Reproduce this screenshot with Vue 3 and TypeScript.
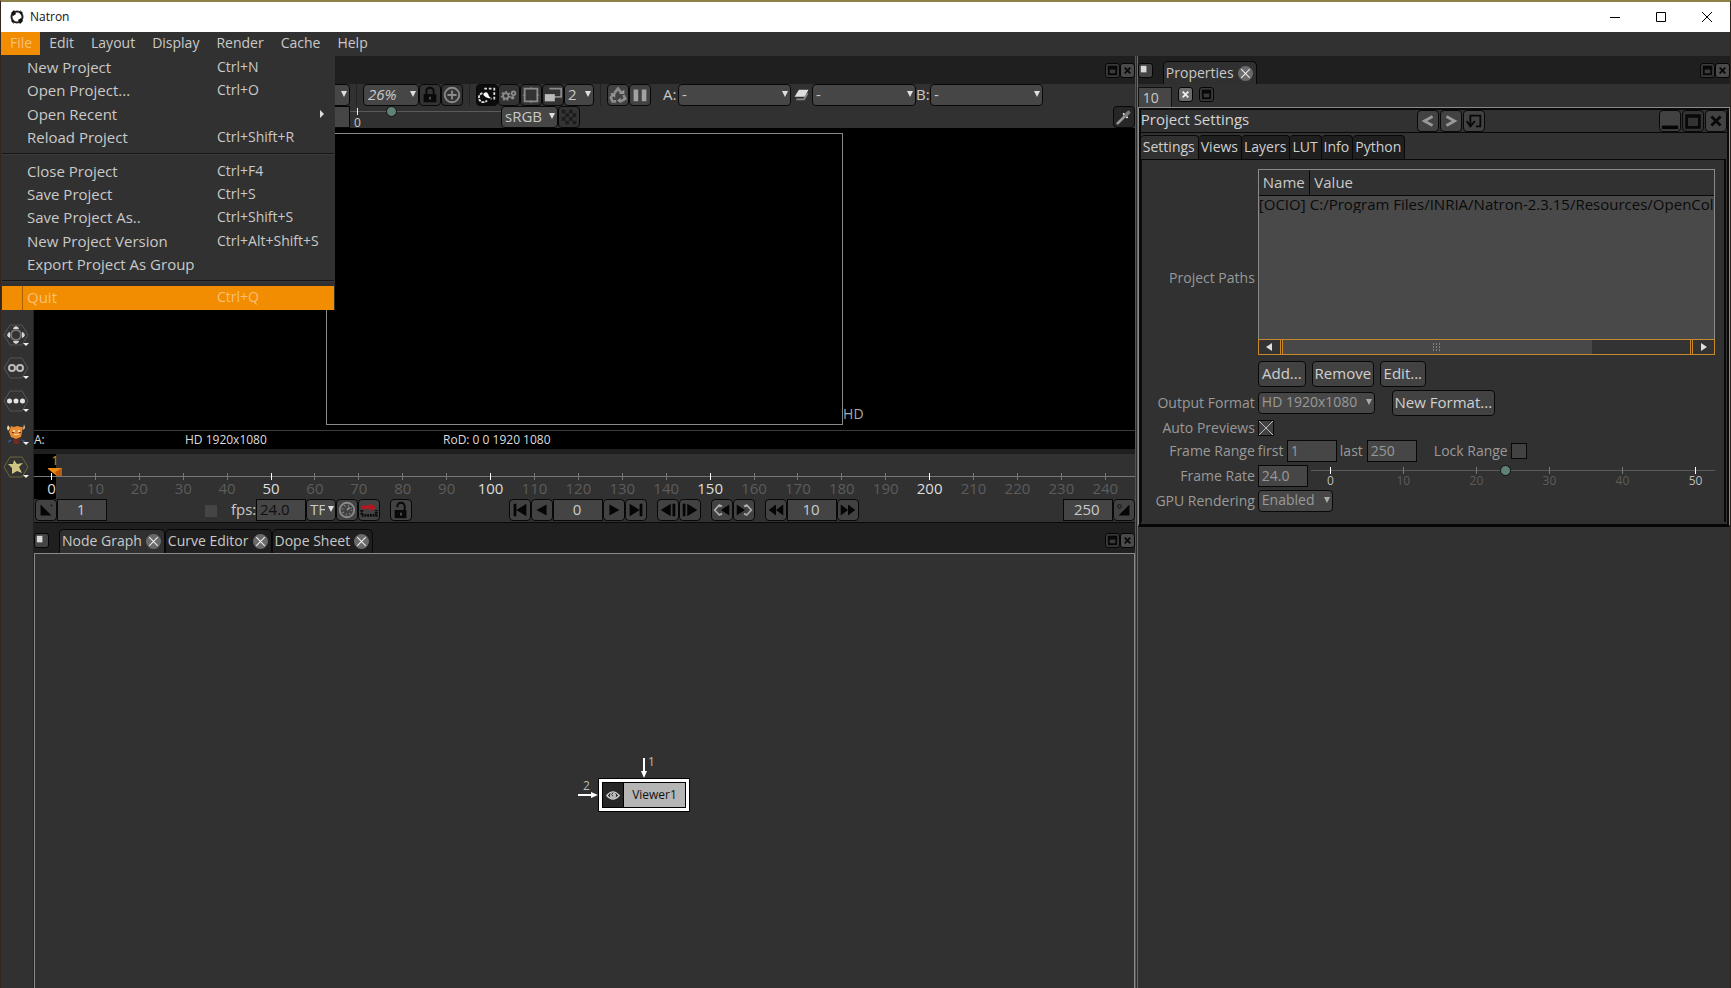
<script setup lang="ts">
import { ref } from 'vue'

interface MenuEntry { label: string; keys?: string; sub?: boolean }
interface Glyph { label: string; solid?: string; line?: string }

const menus = ['File', 'Edit', 'Layout', 'Display', 'Render', 'Cache', 'Help']
const fileTop: MenuEntry[] = [
  { label: 'New Project', keys: 'Ctrl+N' },
  { label: 'Open Project...', keys: 'Ctrl+O' },
  { label: 'Open Recent', sub: true },
  { label: 'Reload Project', keys: 'Ctrl+Shift+R' },
]
const fileMid: MenuEntry[] = [
  { label: 'Close Project', keys: 'Ctrl+F4' },
  { label: 'Save Project', keys: 'Ctrl+S' },
  { label: 'Save Project As..', keys: 'Ctrl+Shift+S' },
  { label: 'New Project Version', keys: 'Ctrl+Alt+Shift+S' },
  { label: 'Export Project As Group' },
]

const frames = Array.from({ length: 25 }, (_, i) => i * 10)
const rates = [0, 10, 20, 30, 40, 50]
const settingsTabs = ['Settings', 'Views', 'Layers', 'LUT', 'Info', 'Python']
const lowerTabs = ['Node Graph', 'Curve Editor', 'Dope Sheet']

const before: Glyph[] = [
  { label: 'First frame', solid: 'M4 4h3v14H4zM18 4v14L7 11z' },
  { label: 'Play backward', solid: 'M16 5v12L5 11z' },
]
const after: Glyph[] = [
  { label: 'Play forward', solid: 'M6 5v12l11-6z' },
  { label: 'Last frame', solid: 'M4 4v14l11-7zM15 4h3v14h-3z' },
]
const steps: Glyph[] = [
  { label: 'Previous frame', solid: 'M14 4v14L3 11zM16 4h3v14h-3z' },
  { label: 'Next frame', solid: 'M3 4h3v14H3zM8 4v14l11-7z' },
]
const keyframes: Glyph[] = [
  { label: 'Previous keyframe', solid: 'M19 5v12l-9-6z', line: 'M11 7L8 5.500L3 11l5 5.500L11 15' },
  { label: 'Next keyframe', solid: 'M3 5v12l9-6z', line: 'M11 7l3-1.500L19 11l-5 5.500L11 15' },
]

const cpu = ref(26)
const rate = ref(24)
</script>

<template>
  <div class="window">
    <header class="title">
      <svg class="logo" viewBox="0 0 16 16" aria-hidden="true">
        <circle cx="8" cy="8" r="5.500" fill="none" stroke="#222" stroke-width="2" />
        <path d="M2 4l3-3 2 4-3 2zM14 12l-3 3-2-4 3-2zM11 1l3 3-2 2zM5 15l-3-3 2-2z" fill="#111" />
      </svg>
      <span class="name">Natron</span>
      <button class="sys" aria-label="Minimize"><svg viewBox="0 0 12 12"><path d="M1 6.500h10" /></svg></button>
      <button class="sys" aria-label="Maximize"><svg viewBox="0 0 12 12"><path d="M1.500 1.500h9v9h-9z" /></svg></button>
      <button class="sys" aria-label="Close"><svg viewBox="0 0 12 12"><path d="M1 1l10 10M11 1L1 11" /></svg></button>
    </header>

    <nav class="menubar">
      <button v-for="m in menus" :key="m" :class="{ open: m === 'File' }">{{ m }}</button>
      <div class="dropdown" role="menu">
        <div class="group four">
          <button v-for="e in fileTop" :key="e.label" role="menuitem"><span>{{ e.label }}</span><span class="keys">{{ e.keys }}</span><i v-if="e.sub" class="sub" /></button>
        </div>
        <hr>
        <div class="group five">
          <button v-for="e in fileMid" :key="e.label" role="menuitem"><span>{{ e.label }}</span><span class="keys">{{ e.keys }}</span></button>
        </div>
        <hr>
        <button class="quit" role="menuitem"><span>Quit</span><span class="keys">Ctrl+Q</span></button>
      </div>
    </nav>

    <div class="body">
      <aside class="tools">
        <button aria-label="Transform"><svg viewBox="0 0 28 28"><path class="hex" d="M8 4h12l6 10-6 10H8L2 14z" /><circle cx="14" cy="14" r="5" fill="none" stroke="#777" stroke-width="2" /><path fill="#d4d4d4" d="M14 5q3 1 3 3h-6q0-2 3-3zM14 23q3-1 3-3h-6q0 2 3 3zM5 14q1-3 3-3v6q-2 0-3-3zM23 14q-1-3-3-3v6q2 0 3-3z" /><path class="more" d="M21 22h6l-3 3z" /></svg></button>
        <button aria-label="Views"><svg viewBox="0 0 28 28"><path class="hex" d="M8 4h12l6 10-6 10H8L2 14z" /><circle cx="10" cy="14" r="3" fill="none" stroke="#bbb" stroke-width="2" /><circle cx="18" cy="14" r="3" fill="none" stroke="#bbb" stroke-width="2" /><path class="more" d="M21 22h6l-3 3z" /></svg></button>
        <button aria-label="Other"><svg viewBox="0 0 28 28"><path class="hex" d="M8 4h12l6 10-6 10H8L2 14z" /><path fill="#e4e4e4" d="M5 14a2.500 2.500 0 1 0 5 0a2.500 2.500 0 1 0-5 0M11.500 14a2.500 2.500 0 1 0 5 0a2.500 2.500 0 1 0-5 0M18 14a2.500 2.500 0 1 0 5 0a2.500 2.500 0 1 0-5 0" /><path class="more" d="M21 22h6l-3 3z" /></svg></button>
        <button aria-label="GMIC"><svg viewBox="0 0 28 28"><path fill="#e88a32" d="M9 6l3 1 3-1 4 1 2 0-1 5-1 5-5 2-5-2-2-5z" /><path fill="#f7d9a8" d="M6 5l2 3-2 3-1-3zM22 4l1 4-2 2zM11 10h2v2h-2zM16 10h2v2h-2zM12 14h5v1h-5z" /><path fill="#6b2d22" d="M10 12h2v1h-2zM17 12h2v1h-2zM11 19h7l-1 5h-5z" /><path stroke="#465a92" stroke-width="1.500" d="M9 20l-3 2M20 20l3 2" /><path class="more" d="M21 22h6l-3 3z" /></svg></button>
        <button aria-label="Extra"><svg viewBox="0 0 28 28"><path class="hex gold" d="M8 4h12l6 10-6 10H8L2 14z" /><path fill="#d0c684" d="M12 7l3 4 6-1-4 4 3 6-5-2-5 3v-6l-4-4h5z" /><path class="more" d="M21 22h6l-3 3z" /></svg></button>
      </aside>

      <main class="center">
        <div class="tabbar upper">
          <span class="push" />
          <button class="mini" aria-label="Float viewer"><svg viewBox="0 0 14 14"><path d="M3 3h8v8H3z" /><path class="fillk" d="M3 3h8v2H3z" /></svg></button>
          <button class="mini lit" aria-label="Close viewer"><svg viewBox="0 0 14 14"><path d="M4 4l6 6M10 4l-6 6" /></svg></button>
        </div>

        <div class="row">
          <span class="sel under"><select aria-label="Layer"><option></option></select></span>
          <i class="sep" />
          <span class="sel zoom"><select aria-label="Zoom"><option>26%</option></select></span>
          <button class="ic" aria-label="Synchronize viewers"><svg viewBox="0 0 22 22"><path d="M7 11V7q0-4 4-4t4 4v4" fill="none" stroke="#090909" stroke-width="2" /><path fill="#090909" d="M4 10h14v9H4z" /><path fill="#555" d="M10 13h2v3h-2z" /></svg></button>
          <button class="ic" aria-label="Center image"><svg class="gray" viewBox="0 0 22 22"><circle cx="11" cy="11" r="8" /><path d="M11 6v10M6 11h10" /></svg></button>
          <i class="sep" />
          <button class="ic on" aria-label="Clip to project"><svg viewBox="0 0 22 22"><path d="M8 4h11v11h-4" fill="none" stroke="#ddd" stroke-width="2" stroke-dasharray="3 2" /><path d="M6 9a5 5 0 1 0 5 8" fill="none" stroke="#ddd" stroke-width="2" stroke-dasharray="3 1" /><path fill="#fff" d="M7 11q0-3 3-3 2 0 3 4l2 2q-4 2-8-3z" /></svg></button>
          <button class="ic" aria-label="Full frame processing"><svg class="gray" viewBox="0 0 22 22"><circle cx="7.500" cy="12" r="4.500" stroke-dasharray="2 2" /><circle cx="7.500" cy="12" r="3" /><circle cx="16" cy="9" r="2" /><circle cx="15" cy="14" r="1" /></svg></button>
          <button class="ic" aria-label="Region of interest"><svg class="gray" viewBox="0 0 22 22"><path d="M4 4h14v14H4z" /><path d="M11 2v3M11 17v3M2 11h3M17 11h3" stroke-width="1" /></svg></button>
          <button class="ic" aria-label="Proxy mode"><svg class="gray" viewBox="0 0 22 22"><path d="M7 4h13v9H12" /><path d="M2 10h11v8H2z" fill="#bbb" stroke="none" /></svg></button>
          <span class="sel two"><select aria-label="Proxy level"><option>2</option></select></span>
          <i class="sep" />
          <button class="ic lite" aria-label="Refresh"><svg class="gray" viewBox="0 0 22 22"><path d="M7 9l4-5 4 5M17 11l2 4-5 3M9 18H5l-2-4 3-4" stroke-width="3" /><path d="M18 5v5h-6zM14 14v6l-4-3zM2 9l6 0v5z" fill="#999" stroke="none" /></svg></button>
          <button class="ic lite" aria-label="Pause updates"><svg viewBox="0 0 22 22"><path fill="#a2a2a2" d="M4 5h5v13H4zM13 5h5v13h-5z" /></svg></button>
          <label class="in" for="inputA">A:</label>
          <span class="sel wide"><select id="inputA"><option>-</option></select></span>
          <button class="ic flat" aria-label="Compositing"><svg viewBox="0 0 22 22"><path fill="#ddd" d="M8 5h11l-4 8H3z" /><path fill="none" stroke="#888" stroke-width="2" d="M5 16h9l4-7" /></svg></button>
          <span class="sel op"><select aria-label="Operator"><option>-</option></select></span>
          <label class="inb" for="inputB">B:</label>
          <span class="sel wide"><select id="inputB"><option>-</option></select></span>
        </div>

        <div class="row second">
          <input class="gain" aria-label="Gamma" value="">
          <div class="gamma">
            <input v-model="cpu" type="range" min="0" max="100" aria-label="Gamma slider">
            <span class="zero">0</span>
          </div>
          <span class="sel srgb"><select aria-label="Color space"><option>sRGB</option></select></span>
          <button class="ic" aria-label="Checkerboard"><svg viewBox="0 0 22 22"><path fill="#1c1c1c" d="M3 3h4v4H3zM11 3h4v4h-4zM7 7h4v4H7zM15 7h4v4h-4zM3 11h4v4H3zM11 11h4v4h-4zM7 15h4v4H7zM15 15h4v4h-4z" /></svg></button>
          <span class="push" />
          <button class="ic pick" aria-label="Color picker"><svg viewBox="0 0 22 22"><path d="M4 18l8-8" stroke="#999" stroke-width="3" stroke-linecap="round" /><path d="M10 7l5 5" stroke="#eee" stroke-width="2" /><path d="M13 9l3-3" stroke="#777" stroke-width="4" stroke-linecap="round" /></svg></button>
        </div>

        <div class="screen">
          <div class="format"><span>HD</span></div>
        </div>
        <div class="info"><span>A:</span><span>HD 1920x1080</span><span>RoD: 0 0 1920 1080</span></div>

        <div class="timeline">
          <div class="past" />
          <div class="marker"><span>1</span><svg viewBox="0 0 14 8"><path fill="#f08a12" d="M0 0h14v8H9L0 1z" /><path fill="#b65c06" d="M7 4l7-4v8H9z" /></svg></div>
          <div class="ruler">
            <span v-for="f in frames" :key="f" :class="{ major: f % 50 === 0 }">{{ f }}</span>
          </div>
        </div>

        <div class="player">
          <button class="ic lite" aria-label="Set playback in"><svg viewBox="0 0 22 22"><path fill="#050505" d="M5 5v12h12z" /><circle cx="17" cy="6" r="1" fill="#111" /></svg></button>
          <input class="num mid" aria-label="In point" value="1">
          <input class="cache" type="checkbox" aria-label="Desired fps">
          <label class="fps" for="fps">fps:</label>
          <input id="fps" class="num dark" value="24.0">
          <span class="sel tf"><select aria-label="Time format"><option>TF</option></select></span>
          <button class="ic lite" aria-label="Turbo mode"><svg class="gray" viewBox="0 0 22 22"><circle cx="11" cy="11" r="8" /><circle cx="11" cy="11" r="5" stroke-dasharray="1 3" /><path d="M11 11l3-3" /></svg></button>
          <button class="ic lite" aria-label="Playback mode"><svg viewBox="0 0 22 22"><path d="M3 11v6h16v-6" fill="none" stroke="#0a0a0a" stroke-width="3" stroke-dasharray="2 1" /><path fill="#b3161c" d="M3 6h8V3l8 5-6 5V10H3z" /></svg></button>
          <button class="ic lite lock" aria-label="Lock timeline range"><svg viewBox="0 0 22 22"><path d="M7 8V6q1-3 4-3t4 3v6" fill="none" stroke="#090909" stroke-width="2" /><path fill="#090909" d="M4 11h13v9H4z" /><path fill="#555" d="M10 14h2v3h-2z" /></svg></button>
          <button v-for="g in before" :key="g.label" class="ic lite" :aria-label="g.label"><svg viewBox="0 0 22 22"><path :d="g.solid" fill="#050505" /></svg></button>
          <input class="num mid" aria-label="Current frame" value="0">
          <button v-for="g in after" :key="g.label" class="ic lite" :aria-label="g.label"><svg viewBox="0 0 22 22"><path :d="g.solid" fill="#050505" /></svg></button>
          <div class="pair">
            <button v-for="g in steps" :key="g.label" class="ic lite" :aria-label="g.label"><svg viewBox="0 0 22 22"><path :d="g.solid" fill="#050505" /></svg></button>
          </div>
          <div class="pair">
            <button v-for="g in keyframes" :key="g.label" class="ic lite" :aria-label="g.label"><svg viewBox="0 0 22 22"><path :d="g.line" fill="none" stroke="#aaa" stroke-width="2" /><path :d="g.solid" fill="#050505" /></svg></button>
          </div>
          <button class="ic lite jump" aria-label="Jump back"><svg viewBox="0 0 22 22"><path fill="#050505" d="M11 5v12L3 11zM19 5v12l-8-6z" /></svg></button>
          <input class="num mid" aria-label="Frame increment" value="10">
          <button class="ic lite" aria-label="Jump forward"><svg viewBox="0 0 22 22"><path fill="#050505" d="M3 5v12l8-6zM11 5v12l8-6z" /></svg></button>
          <span class="push" />
          <input class="num mid" aria-label="Out point" value="250">
          <button class="ic lite" aria-label="Set playback out"><svg viewBox="0 0 22 22"><path fill="#050505" d="M17 5v12H5z" /><circle cx="6" cy="7" r="2" fill="none" stroke="#111" /></svg></button>
        </div>

        <div class="tabbar lower">
          <button class="mini corner" aria-label="Manage layout"><svg viewBox="0 0 14 14"><path fill="#d8d8d8" stroke="none" d="M2 2h6v7H2z" /></svg></button>
          <div v-for="t in lowerTabs" :key="t" class="tab" :class="{ active: t === 'Node Graph' }">
            <button class="tname">{{ t }}</button>
            <button class="x" :aria-label="'Close ' + t"><svg viewBox="0 0 14 14"><path d="M3 3l8 8M11 3l-8 8" /></svg></button>
          </div>
          <span class="push" />
          <button class="mini" aria-label="Float pane"><svg viewBox="0 0 14 14"><path d="M3 3h8v8H3z" /><path class="fillk" d="M3 3h8v2H3z" /></svg></button>
          <button class="mini lit" aria-label="Close pane"><svg viewBox="0 0 14 14"><path d="M4 4l6 6M10 4l-6 6" /></svg></button>
        </div>

        <section class="graph">
          <div class="node">
            <div class="eye"><svg viewBox="0 0 18 14"><path d="M2 7q7-8 14 0q-7 8-14 0z" fill="none" stroke="#ccc" stroke-width="1.500" /><circle cx="9" cy="7" r="3.500" fill="#bbb" /><path d="M9 4q-3 2 0 4" stroke="#333" fill="none" /></svg></div>
            <div class="nname">Viewer1</div>
          </div>
          <svg class="arrow down" viewBox="0 0 8 20"><path d="M3 0h2v13h2L4 20 1 13h2z" /></svg>
          <span class="n1">1</span>
          <svg class="arrow side" viewBox="0 0 20 8"><path d="M0 3h13V1l7 3-7 3V5H0z" /></svg>
          <span class="n2">2</span>
        </section>
      </main>

      <div class="splitter" />

      <section class="right">
        <div class="tabbar upper">
          <button class="mini corner" aria-label="Manage layout"><svg viewBox="0 0 14 14"><path fill="#d8d8d8" stroke="none" d="M2 2h6v7H2z" /></svg></button>
          <div class="tab active props">
            <button class="tname">Properties</button>
            <button class="x" aria-label="Close Properties"><svg viewBox="0 0 14 14"><path d="M3 3l8 8M11 3l-8 8" /></svg></button>
          </div>
          <span class="push" />
          <button class="mini" aria-label="Float properties"><svg viewBox="0 0 14 14"><path d="M3 3h8v8H3z" /><path class="fillk" d="M3 3h8v2H3z" /></svg></button>
          <button class="mini lit" aria-label="Close properties"><svg viewBox="0 0 14 14"><path d="M4 4l6 6M10 4l-6 6" /></svg></button>
        </div>
        <div class="stackbar">
          <input aria-label="Maximum panels" value="10">
          <button class="mini bright" aria-label="Clear all panels"><svg viewBox="0 0 14 14"><path d="M4 4l6 6M10 4l-6 6" /></svg></button>
          <button class="mini" aria-label="Minimize all panels"><svg viewBox="0 0 14 14"><path d="M3 3h8v8H3z" /><path class="fillk" d="M3 3h8v2H3z" /></svg></button>
        </div>

        <div class="panel">
          <div class="phead">
            <span class="ptitle">Project Settings</span>
            <button class="ic lite" aria-label="Undo"><svg class="chev" viewBox="0 0 22 22"><path d="M16 6L7 11l9 5" /></svg></button>
            <button class="ic lite" aria-label="Redo"><svg class="chev" viewBox="0 0 22 22"><path d="M6 6l9 5-9 5" /></svg></button>
            <button class="ic lite" aria-label="Restore defaults"><svg class="restore" viewBox="0 0 22 22"><path d="M7 16V5h11v12h-5M3 11l4 6 5-6" /></svg></button>
            <span class="push" />
            <button class="ic lite" aria-label="Minimize panel"><svg viewBox="0 0 22 22"><path fill="#050505" d="M2 16h18v4H2z" /></svg></button>
            <button class="ic" aria-label="Float panel"><svg class="blk" viewBox="0 0 22 22"><path d="M4 5h14v13H4zM4 6h14" /></svg></button>
            <button class="ic lite" aria-label="Close panel"><svg class="blk" viewBox="0 0 22 22"><path d="M6 6l10 10M16 6L6 16" /></svg></button>
          </div>
          <div class="ptabs">
            <button v-for="t in settingsTabs" :key="t" :class="{ active: t === 'Settings' }">{{ t }}</button>
          </div>
          <form class="form" @submit.prevent>
            <span class="lab">Project Paths</span>
            <div class="paths">
              <div class="box">
                <table>
                  <thead><tr><th>Name</th><th>Value</th></tr></thead>
                  <tbody><tr><td>[OCIO]</td><td>C:/Program Files/INRIA/Natron-2.3.15/Resources/OpenColorIO-Configs</td></tr></tbody>
                </table>
                <div class="hbar">
                  <button type="button" aria-label="Scroll left"><i class="lt" /></button>
                  <div class="track"><div class="thumb"><svg viewBox="0 0 10 8"><path d="M0 1h9M0 4h9M0 7h9" stroke="#bbb" stroke-dasharray="1 2" /></svg></div></div>
                  <button type="button" aria-label="Scroll right"><i class="rt" /></button>
                </div>
              </div>
              <div class="acts">
                <button type="button" class="push-b add">Add...</button>
                <button type="button" class="push-b rem">Remove</button>
                <button type="button" class="push-b edi">Edit...</button>
              </div>
            </div>

            <label class="lab" for="fmt">Output Format</label>
            <div class="field">
              <span class="sel fmt"><select id="fmt"><option>HD 1920x1080</option></select></span>
              <button type="button" class="push-b newf">New Format...</button>
            </div>

            <label class="lab" for="prev">Auto Previews</label>
            <div class="field"><input id="prev" class="chk" type="checkbox" checked></div>

            <span class="lab">Frame Range</span>
            <div class="field">
              <label class="first" for="first">first</label><input id="first" class="num" value="1">
              <label class="last" for="last">last</label><input id="last" class="num" value="250">
              <label class="lockr" for="lockr">Lock Range</label><input id="lockr" class="chk" type="checkbox">
            </div>

            <label class="lab" for="rate">Frame Rate</label>
            <div class="field">
              <input id="rate" class="num" value="24.0">
              <div class="scale">
                <input v-model="rate" type="range" min="-2" max="52" aria-label="Frame rate slider">
                <div class="marks"><span v-for="r in rates" :key="r" :class="{ major: r % 50 === 0 }">{{ r }}</span></div>
              </div>
            </div>

            <label class="lab" for="gpu">GPU Rendering</label>
            <div class="field"><span class="sel gpu"><select id="gpu"><option>Enabled</option></select></span></div>
          </form>
        </div>
      </section>
    </div>
  </div>
</template>

<style>
html, body, #app { height: 100%; margin: 0; }
</style>

<style scoped>
* { box-sizing: border-box; }
.window {
  height: 100vh; display: flex; flex-direction: column; overflow: hidden;
  border: solid #33261f; border-width: 2px 1px 0; border-top-color: #8f8048;
  background: #313131; color: #c9c9c9;
  font: 15px/20px "Open Sans", "Noto Sans", sans-serif;
}
button, input, select { font: inherit; color: inherit; margin: 0; padding: 0; border: 0; border-radius: 0; background: none; min-width: 0; outline: none; }
button svg { display: block; width: 100%; height: 100%; }
.push { flex: 1; }

.title { flex: none; height: 30px; background: #fff; color: #111; display: flex; align-items: center; font-size: 12px; padding-left: 8px; }
.logo { width: 16px; height: 16px; margin-right: 5px; }
.name { flex: 1; }
.sys { width: 46px; height: 28px; display: grid; place-items: center; }
.sys svg { width: 12px; height: 12px; fill: none; stroke: #000; }

.menubar { flex: none; height: 24px; display: flex; position: relative; z-index: 5; font-size: 14px; }
.menubar > button { padding: 0 8px 2px 9px; height: 23px; }
.menubar > button.open { background: #f28c00; color: #f8c078; }
.dropdown { position: absolute; left: 0; top: 23px; width: 334px; padding: 0 1px; background: #313131; font-size: 15px; }
.group { display: grid; grid-auto-rows: 1fr; }
.four { height: 94px; }
.five { height: 117px; }
.dropdown button { display: grid; grid-template-columns: 190px 1fr 12px; align-items: center; text-align: left; padding: 0 2px 0 25px; width: 100%; white-space: nowrap; }
.keys { font-size: 14px; }
.dropdown hr { height: 2px; margin: 4px 0; border: 0; border-top: 1px solid #161616; background: #3a3a3a; }
.dropdown .quit { height: 24px; padding-bottom: 2px; background: #f28c00; color: #f8c078; box-shadow: inset 20px 0 #f28c00, inset 21px 0 #a86000; }
.sub { border: 4px solid transparent; border-left-color: #ddd; border-right: 0; }

.body { flex: 1; min-height: 0; display: flex; }
.tools { flex: none; width: 33px; display: flex; flex-direction: column; gap: 5px; padding: 265px 0 0 1px; border-right: 1px solid #222; }
.tools button { width: 28px; height: 28px; }
.hex { fill: #333; stroke: #555; stroke-width: 1; }
.gold { stroke: #6b6636; }
.more { fill: #eee; }
.center { flex: 1; min-width: 0; display: flex; flex-direction: column; }
.splitter { flex: none; width: 3px; background: #2c2c2c; border: solid #6a6a6a; border-width: 0 1px; border-left-color: #555; }
.right { flex: none; width: 34.25%; display: flex; flex-direction: column; }

.tabbar { flex: none; background: #1f1f1f; display: flex; align-items: center; padding-top: 4px; font-size: 14px; }
.upper { height: 28px; }
.mini { width: 15px; height: 15px; border: 1px solid #050505; border-radius: 3px; background: #3a3a3a; }
.mini svg { fill: none; stroke: #080808; stroke-width: 2; }
.mini .fillk { fill: #080808; }
.lit { background: #4a4a4a; }
.bright { background: #6c6c6c; }
.bright svg { stroke: #eee; }
.upper .mini { margin-bottom: 4px; }
.tab { height: 24px; display: flex; align-items: center; padding: 0 3px 0 2px; background: #1f1f1f; border: solid #080808; border-width: 1px 1px 0; border-radius: 5px 5px 0 0; align-self: flex-end; white-space: nowrap; }
.tab.active { background: #303030; }
.tname { padding-bottom: 1px; }
.x { width: 15px; height: 15px; border-radius: 8px; background: #6a6a6a; margin-left: 4px; }
.x svg { stroke: #eee; stroke-width: 1; }
.corner { margin-right: 10px; background: #444; }
.lower { height: 31px; border-top: 1px solid #0a0a0a; }

.row { flex: none; height: 22px; display: flex; align-items: stretch; }
.sep { width: 1px; margin: 0 6px; background: #232323; }
.ic { flex: none; width: 22px; height: 22px; border: 1px solid #080808; border-radius: 4px; background: #333; }
.lite { background: #424242; }
.on { background: #0c0c0c; }
.pick { background: #262626; }
.flat { border-color: transparent; width: 21px; background: none; }
.gray { fill: none; stroke: #8b8b8b; stroke-width: 2; }
.sel { position: relative; flex: none; display: block; height: 22px; }
.sel select { appearance: none; display: block; width: 100%; height: 22px; line-height: 18px; padding: 0 12px 2px 3px; border: 1px solid #080808; border-radius: 4px; background: #464646; }
.sel::after { content: ""; position: absolute; right: 3px; top: 7px; border: 3px solid transparent; border-top: 6px solid #e0e0e0; border-bottom: 0; pointer-events: none; }
.under { width: 316px; }
.zoom { width: 56px; font-style: italic; }
.zoom select { padding-left: 4px; }
.two { width: 30px; }
.wide { width: 113px; }
.op { width: 104px; }
.in { width: 27px; padding-left: 12px; }
.inb { width: 14px; }
.gain { width: 316px; background: #464646; border: 1px solid #080808; }
.gamma { width: 151px; position: relative; }
.zero { position: absolute; left: 4px; top: 10px; font-size: 12px; line-height: 14px; }
.gamma::before { content: ""; position: absolute; left: 7px; top: 2px; width: 1px; height: 7px; background: #eee; }
.srgb { width: 57px; }
input[type="range"] { appearance: none; display: block; width: 100%; height: 11px; background: linear-gradient(#5a5a5a, #5a5a5a) 0 5px / 100% 1px no-repeat; }
input[type="range"]::-webkit-slider-thumb { appearance: none; width: 11px; height: 11px; border-radius: 6px; border: 1px solid #111; background: #5f8274; }

.screen { flex: none; height: 302px; background: #000; position: relative; }
.format { position: absolute; left: 26.500%; top: 5px; width: 47%; height: 292px; border: 1px solid #8a8a8a; }
.format span { position: absolute; left: 100%; bottom: 0; padding-left: 1px; color: #aaa; font-size: 14px; }
.info { flex: none; height: 24px; padding-bottom: 5px; display: grid; grid-template-columns: 151px 258px 1fr; align-items: center; background: linear-gradient(#000, #000) 0 0 / 100% 18px no-repeat #1f1f1f; border-top: 1px solid #3c3c3c; font-size: 12px; line-height: 18px; color: #ddd; }

.timeline { flex: none; height: 45px; position: relative; }
.past { position: absolute; left: 0; top: 0; width: 22px; height: 45px; background: #000; }
.marker { position: absolute; left: 14px; top: 0; width: 14px; color: #f08a12; font-size: 12px; line-height: 14px; text-align: center; }
.marker svg { display: block; width: 14px; height: 8px; }
.ruler { position: relative; height: 45px; display: flex; justify-content: space-between; padding: 19px 29px 0 17px; background: linear-gradient(#777, #777) 0 22px / 100% 1px no-repeat; }
.ruler span, .marks span { width: 1px; display: flex; flex-direction: column; align-items: center; color: #5c5c5c; }
.ruler span::before, .marks span::before { content: ""; flex: none; width: 1px; height: 7px; background: #777; }
.ruler span { line-height: 17px; }
.ruler .major, .marks .major { color: #ddd; }
.ruler .major::before, .marks .major::before { background: #fff; }

.player { flex: none; height: 23px; padding-left: 1px; display: flex; }
.num { flex: none; width: 50px; height: 22px; line-height: 18px; padding: 0 3px 2px; border: 1px solid #080808; background: #464646; }
.mid { text-align: center; background: #444; }
.mid.num { padding-right: 5px; }
.dark { color: #101010; }
.cache { appearance: none; width: 12px; height: 12px; margin: 6px 14px 0 98px; background: #454545; }
.fps { width: 25px; }
.tf { width: 30px; }
.tf select { padding-right: 10px; }
.tf::after { right: 2px; }
.lock { margin: 0 97px 0 10px; }
.pair { display: flex; margin-left: 10px; }
.jump { margin-left: 10px; }

.graph { flex: 1; min-height: 0; position: relative; border: solid #8a8a8a; border-width: 1px 1px 0; background: #313131; }
.node { position: absolute; left: 564px; top: 225px; width: 90px; height: 32px; display: flex; padding: 1px; border: 3px solid #fff; outline: 1px solid #000; background: #000; color: #111; font-size: 12px; line-height: 24px; }
.eye { width: 20px; background: #262626; display: grid; place-items: center; }
.eye svg { width: 16px; height: 13px; }
.nname { flex: 1; background: #b5b5b5; text-align: center; margin-left: 1px; }
.arrow { position: absolute; fill: #fff; }
.down { left: 605px; top: 204px; width: 8px; height: 20px; }
.side { left: 543px; top: 237px; width: 20px; height: 8px; }
.n1, .n2 { position: absolute; font-size: 12px; line-height: 14px; color: #bbb; }
.n1 { left: 613px; top: 201px; }
.n2 { left: 548px; top: 225px; }

.right .tab { height: 23px; }
.stackbar { flex: none; height: 23px; display: flex; gap: 6px; padding-top: 3px; }
.stackbar input { width: 34px; height: 20px; padding: 0 4px; background: #464646; border: 1px solid #111; border-bottom: 0; font-size: 14px; }
.panel { border: 1px solid #8a8a8a; border-bottom: 3px solid #050505; box-shadow: inset 2px 2px #0a0a0a, inset -2px 0 #0a0a0a; padding: 2px; }
.phead { display: flex; height: 23px; border-bottom: 1px solid #080808; }
.phead .ic { margin-left: 1px; }
.ptitle { width: 47%; line-height: 18px; color: #d4d4d4; }
.ptabs { display: flex; padding-top: 2px; font-size: 14px; }
.ptabs button { height: 24px; padding: 0 3px 2px 2px; border: solid #080808; border-width: 1px 1px 0 0; border-radius: 4px 4px 0 0; background: #1f1f1f; color: #d0d0d0; }
.ptabs .active { background: #313131; }
.chev, .blk, .restore { fill: none; stroke: #999; stroke-width: 3; }
.blk { stroke: #080808; }
.restore { stroke: #080808; stroke-width: 2; }
.form { display: grid; grid-template-columns: 113px minmax(0, 1fr); column-gap: 3px; row-gap: 3px; align-items: center; padding: 9px 9px 10px 0; margin-right: 1px; border: solid #080808; border-width: 1px 2px 0 1px; color: #999; font-size: 14px; line-height: 17px; }
.lab { text-align: right; white-space: nowrap; padding-bottom: 1px; }
.box { height: 186px; display: flex; flex-direction: column; border: 1px solid #8a8a8a; background: #494949; font-size: 15px; }
table { width: 100%; table-layout: fixed; border-collapse: collapse; }
th { height: 25px; padding: 0 4px; text-align: left; font-weight: 400; color: #c9c9c9; background: #313131; border-bottom: 1px solid #080808; }
th:first-child { width: 51px; border-right: 1px solid #080808; }
td { padding: 0; line-height: 17px; color: #0a0a0a; white-space: nowrap; }
td:last-child { overflow: hidden; }
.hbar { display: flex; height: 16px; margin: auto -1px -1px; border: 1px solid #c8892a; background: #333; }
.hbar button { width: 22px; display: grid; place-items: center; border: solid #c8892a; border-width: 0 1px 0 0; }
.hbar button:last-child { border-width: 0 0 0 1px; }
.track { flex: 1; margin: 0 1px; border: solid #c8892a; border-width: 0 1px; }
.thumb { width: 76%; height: 14px; background: #484848; display: grid; place-items: center; }
.thumb svg { width: 10px; height: 8px; }
.lt, .rt { border: 4px solid transparent; }
.lt { border-right: 6px solid #ddd; border-left: 0; }
.rt { border-left: 6px solid #ddd; border-right: 0; }
.acts { display: flex; gap: 6px; padding-top: 6px; font-size: 15px; }
.push-b { height: 26px; padding-bottom: 2px; border: 1px solid #080808; border-radius: 4px; background: #424242; color: #d0d0d0; white-space: nowrap; }
.add { width: 48px; }
.rem { width: 62px; }
.edi { width: 46px; }
.newf { width: 103px; margin-left: 17px; font-size: 15px; }
.field { display: flex; align-items: center; }
.fmt { width: 117px; }
.gpu { width: 75px; }
.fmt::after, .gpu::after { border-top-color: #aaa; }
.chk { appearance: none; width: 16px; height: 16px; margin: 1px 0; border: 1px solid #080808; background: #424242; }
.chk:checked { background: linear-gradient(45deg, transparent 47%, #bbb 47%, #bbb 53%, transparent 53%), linear-gradient(-45deg, transparent 47%, #bbb 47%, #bbb 53%, transparent 53%), #424242; }
.first { width: 29px; padding-bottom: 1px; }
.last { width: 30px; padding: 0 0 1px 3px; }
.lockr { width: 94px; padding: 0 0 1px 17px; white-space: nowrap; }
.scale { flex: 1; margin-left: 3px; height: 22px; }
.marks { display: flex; justify-content: space-between; padding: 0 19px; margin-top: -9px; font-size: 12px; line-height: 14px; }
.marks .major { color: #bbb; }
</style>
